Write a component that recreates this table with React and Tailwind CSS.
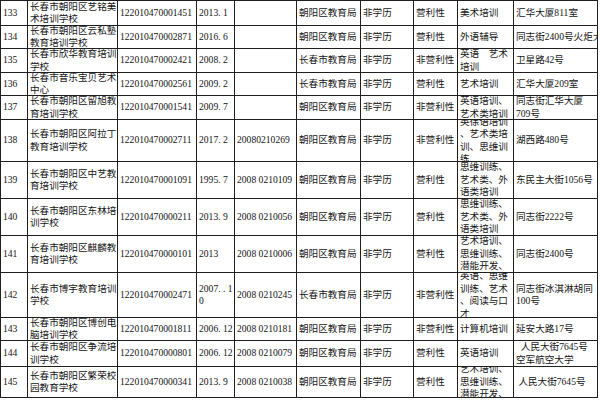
import React from 'react';

// each cell: "\n" splits the lines the way the sheet wrapped them
const rows = [
  ['133', '长春市朝阳区艺铭美\n术培训学校', '122010470001451', '2013. 1', '', '朝阳区教育局', '非学历', '营利性', '美术培训', '汇华大厦811室'],
  ['134', '长春市朝阳区云私塾\n教育培训学校', '122010470002871', '2016. 6', '', '朝阳区教育局', '非学历', '营利性', '外语辅导', '同志街2400号火炬大厦'],
  ['135', '长春市欣华教育培训\n学校', '122010470002421', '2008. 2', '', '长春市教育局', '非学历', '非营利性', '英语　艺术\n培训', '卫星路42号'],
  ['136', '长春市音乐宝贝艺术\n中心', '122010470002561', '2009. 2', '', '长春市教育局', '非学历', '营利性', '艺术培训', '汇华大厦209室'],
  ['137', '长春市朝阳区留旭教\n育培训学校', '122010470001541', '2009. 7', '', '朝阳区教育局', '非学历', '非营利性', '英语培训、\n艺术类培训', '同志街汇华大厦\n709号'],
  ['138', '长春市朝阳区阿拉丁\n教育培训学校', '122010470002711', '2017. 2', '20080210269', '朝阳区教育局', '非学历', '非营利性', '英徐语培训\n、艺术类培\n训、思维训\n练', '湖西路480号'],
  ['139', '长春市朝阳区中艺教\n育培训学校', '122010470001091', '1995. 7', '2008 0210109', '朝阳区教育局', '非学历', '营利性', '思维训练、\n艺术类、外\n语类培训', '东民主大街1056号'],
  ['140', '长春市朝阳区东林培\n训学校', '122010470000211', '2013. 9', '2008 0210056', '朝阳区教育局', '非学历', '营利性', '思维训练、\n艺术类、外\n语类培训', '同志街2222号'],
  ['141', '长春市朝阳区麒麟教\n育培训学校', '122010470000101', '2013', '2008 0210006', '朝阳区教育局', '非学历', '营利性', '艺术培训、\n思维训练、\n潜能开发、', '同志街2400号'],
  ['142', '长春市博宇教育培训\n学校', '122010470002471', '2007. . 1\n0', '2008 0210245', '长春市教育局', '非学历', '非营利性', '英语、思维\n训练、艺术\n、阅读与口\n才', '同志街冰淇淋胡同\n100号'],
  ['143', '长春市朝阳区博创电\n脑培训学校', '122010470001811', '2006. 12', '2008 0210181', '朝阳区教育局', '非学历', '非营利性', '计算机培训', '延安大路17号'],
  ['144', '长春市朝阳区争流培\n训学校', '122010470000801', '2006. 12', '2008 0210079', '朝阳区教育局', '非学历', '营利性', '英语培训', '  人民大街7645号\n空军航空大学'],
  ['145', '长春市朝阳区繁荣校\n园教育学校', '122010470000341', '2013. 9', '2008 0210038', '朝阳区教育局', '非学历', '营利性', '艺术培训、\n思维训练、\n潜能开发、', ' 人民大街7645号'],
];

const Cell = ({ text }) => (
  <div className="flex items-center overflow-hidden border-r border-b border-[#1f1f1f] pl-[2px]">
    <div className="whitespace-pre leading-[12.5px]">{text}</div>
  </div>
);

export default function App() {
  return (
    <div
      className="w-[600px] h-[400px] bg-white text-[#151515] text-[9.6px] overflow-hidden"
      style={{ fontFamily: '"Liberation Serif", "Noto Sans CJK SC", serif' }}
    >
      <div className="grid w-fit grid-cols-[27px_90px_79px_38px_62px_64px_53px_44px_56px_84px] grid-rows-[25px_23px_24px_23px_24px_42px_37px_37px_37px_45px_23px_26px_31px] border-l border-t border-[#1f1f1f]">
        {rows.map((row, r) =>
          row.map((text, c) => <Cell key={r + '-' + c} text={text} />)
        )}
      </div>
    </div>
  );
}
